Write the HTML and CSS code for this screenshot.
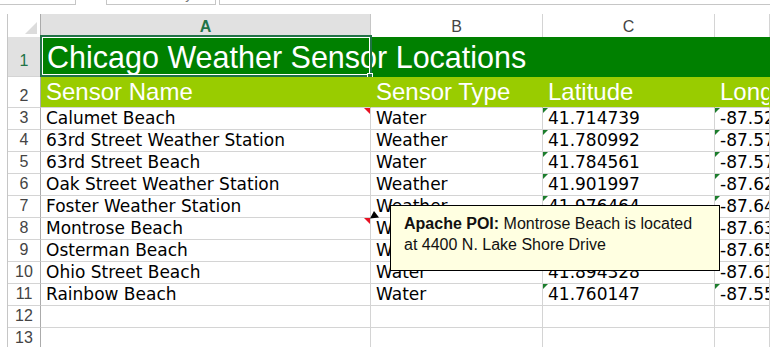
FILE: index.html
```html
<!DOCTYPE html>
<html lang="en">
<head>
    <meta charset="UTF-8">
    <title>Chicago Weather Sensor Locations</title>
    <link rel="stylesheet" href="styles.css">
</head>
<body>
    <!-- Bottom edge of the ribbon buttons -->
    <div class="tabs">
        <div class="tab tab-first"></div>
        <div class="tab tab-mid"><span>Summary Rang</span></div>
        <div class="tab tab-last"></div>
    </div>

    <div class="sheet">
        <div class="row colheads">
            <div class="corner"><span class="corner-tri"></span></div>
            <div class="colhead selected">A</div>
            <div class="colhead">B</div>
            <div class="colhead">C</div>
            <div class="colhead"></div>
        </div>

        <div class="row title-row">
            <div class="rowhead selected">1</div>
            <div class="title">
                Chicago Weather Sensor Locations
                <div class="selection"><span class="handle"></span></div>
            </div>
        </div>

        <div class="row head-row">
            <div class="rowhead">2</div>
            <div class="cell">Sensor Name</div>
            <div class="cell">Sensor Type</div>
            <div class="cell">Latitude</div>
            <div class="cell">Longitude</div>
        </div>

        <div class="row">
            <div class="rowhead">3</div>
            <div class="cell note">Calumet Beach</div>
            <div class="cell">Water</div>
            <div class="cell txt">41.714739</div>
            <div class="cell txt">-87.527356</div>
        </div>
        <div class="row">
            <div class="rowhead">4</div>
            <div class="cell">63rd Street Weather Station</div>
            <div class="cell">Weather</div>
            <div class="cell txt">41.780992</div>
            <div class="cell txt">-87.5727</div>
        </div>
        <div class="row">
            <div class="rowhead">5</div>
            <div class="cell">63rd Street Beach</div>
            <div class="cell">Water</div>
            <div class="cell txt">41.784561</div>
            <div class="cell txt">-87.571453</div>
        </div>
        <div class="row">
            <div class="rowhead">6</div>
            <div class="cell">Oak Street Weather Station</div>
            <div class="cell">Weather</div>
            <div class="cell txt">41.901997</div>
            <div class="cell txt">-87.622092</div>
        </div>
        <div class="row">
            <div class="rowhead">7</div>
            <div class="cell">Foster Weather Station</div>
            <div class="cell">Weather</div>
            <div class="cell txt">41.976464</div>
            <div class="cell txt">-87.647525</div>
        </div>
        <div class="row">
            <div class="rowhead">8</div>
            <div class="cell note">Montrose Beach</div>
            <div class="cell">Water</div>
            <div class="cell txt">41.969094</div>
            <div class="cell txt">-87.638946</div>
        </div>
        <div class="row">
            <div class="rowhead">9</div>
            <div class="cell">Osterman Beach</div>
            <div class="cell">Water</div>
            <div class="cell txt">41.987675</div>
            <div class="cell txt">-87.651008</div>
        </div>
        <div class="row">
            <div class="rowhead">10</div>
            <div class="cell">Ohio Street Beach</div>
            <div class="cell">Water</div>
            <div class="cell txt">41.894328</div>
            <div class="cell txt">-87.613083</div>
        </div>
        <div class="row">
            <div class="rowhead">11</div>
            <div class="cell">Rainbow Beach</div>
            <div class="cell">Water</div>
            <div class="cell txt">41.760147</div>
            <div class="cell txt">-87.550086</div>
        </div>
        <div class="row">
            <div class="rowhead">12</div>
            <div class="cell"></div>
            <div class="cell"></div>
            <div class="cell"></div>
            <div class="cell"></div>
        </div>
        <div class="row">
            <div class="rowhead">13</div>
            <div class="cell"></div>
            <div class="cell"></div>
            <div class="cell"></div>
            <div class="cell"></div>
        </div>

        <!-- Comment on A8 -->
        <svg class="comment-arrow" width="10" height="8" viewBox="0 0 10 8">
            <polygon points="0,7.5 4,0 9,6.5" fill="#000"/>
        </svg>
        <div class="comment">
            <b>Apache POI:</b> Montrose Beach is located<br>
            at 4400 N. Lake Shore Drive
        </div>
    </div>
</body>
</html>
```

FILE: styles.css
```css
/* General */
* {
    box-sizing: border-box;
}

body {
    margin: 0;
    width: 770px;
    height: 347px;
    overflow: hidden;
    background-color: #fff;
    font-family: "Liberation Sans", Arial, sans-serif;
    color: #000;
}

/* Ribbon edge at the top */
.tabs {
    display: flex;
    height: 5px;
    overflow: hidden;
}

.tab {
    height: 5px;
    border-bottom: 1px solid #c6c6c6;
    background-color: #fff;
}

.tab-first {
    width: 76px;
    border-right: 1px solid #c6c6c6;
}

.tab-mid {
    width: 110px;
    margin-left: 30px;
    border-left: 1px solid #c6c6c6;
    border-right: 1px solid #c6c6c6;
    display: flex;
    align-items: flex-end;
    justify-content: center;
    font-size: 14px;
    line-height: 14px;
    color: #777;
}

.tab-mid span {
    margin-bottom: 3px;
    padding-left: 40px;
    white-space: nowrap;
}

.tab-last {
    flex: 1;
    margin-left: 3px;
    border-left: 1px solid #c6c6c6;
}

/* Sheet */
.sheet {
    position: relative;
    margin: 9px 0 0 7px;
    border-left: 1px solid #c6c6c6;
    overflow: hidden;
}

.row {
    display: grid;
    grid-template-columns: 33px 330px 172px 172px 1fr;
    height: 22px;
}

.colheads {
    height: 23px;
}

.corner {
    display: flex;
    align-items: flex-end;
    justify-content: flex-end;
    padding: 0 3px 3px 0;
    border-right: 1px solid #ababab;
    border-bottom: 1px solid #ababab;
}

.corner-tri {
    width: 0;
    height: 0;
    border-left: 12px solid transparent;
    border-bottom: 12px solid #dcdcdc;
}

.colhead {
    text-align: center;
    font-size: 16px;
    line-height: 21px;
    padding-top: 2px;
    color: #444;
    border-right: 1px solid #d4d4d4;
    border-bottom: 1px solid #ababab;
}

.colhead.selected {
    background-color: #e1e1e1;
    color: #217346;
    font-weight: bold;
    border-right-color: #c6c6c6;
}

.rowhead {
    display: flex;
    align-items: flex-end;
    justify-content: center;
    padding-bottom: 2px;
    font-size: 16px;
    color: #444;
    border-right: 1px solid #ababab;
    border-bottom: 1px solid #d4d4d4;
}

.rowhead.selected {
    background-color: #e1e1e1;
    color: #217346;
    padding-bottom: 6px;
}

/* Title row */
.title-row {
    height: 40px;
}

.title {
    position: relative;
    grid-column: 2 / -1;
    background-color: #008000;
    color: #fff;
    font-size: 30.5px;
    line-height: 34px;
    padding: 0 0 3px 6px;
    display: flex;
    align-items: flex-end;
    white-space: nowrap;
}

.selection {
    position: absolute;
    left: -1px;
    top: -2px;
    width: 332px;
    height: 42px;
    border: 2px solid #217346;
    box-shadow: inset 0 0 0 1px #fff;
}

.handle {
    position: absolute;
    right: -3px;
    bottom: -4px;
    width: 6px;
    height: 6px;
    background-color: #217346;
    border: 1px solid #fff;
}

/* Column captions */
.head-row {
    height: 31px;
}

.head-row .cell {
    background-color: #99cc00;
    color: #fff;
    font-family: "Liberation Sans", Arial, sans-serif;
    font-size: 24px;
    line-height: 27px;
    padding-bottom: 2px;
    border-right-color: #99cc00;
    border-bottom-color: #d4d4d4;
}

/* Data cells */
.cell {
    position: relative;
    display: flex;
    align-items: flex-end;
    padding: 0 0 1px 5px;
    font-family: "DejaVu Sans", Verdana, sans-serif;
    font-size: 17px;
    line-height: 20px;
    white-space: nowrap;
    overflow: hidden;
    border-right: 1px solid #d4d4d4;
    border-bottom: 1px solid #d4d4d4;
}

/* Red comment marker */
.note::after {
    content: "";
    position: absolute;
    top: 0;
    right: 0;
    border-top: 6px solid #e81123;
    border-left: 6px solid transparent;
}

/* Green "number stored as text" marker */
.txt::before {
    content: "";
    position: absolute;
    top: 0;
    left: 0;
    border-top: 5px solid #1c7d2c;
    border-right: 5px solid transparent;
}

/* Comment box */
.comment-arrow {
    position: absolute;
    left: 362px;
    top: 197px;
}

.comment {
    position: absolute;
    left: 382px;
    top: 191px;
    width: 330px;
    height: 66px;
    padding: 7px 0 0 13px;
    background-color: #ffffe1;
    border: 1px solid #000;
    font-family: "Liberation Sans", Arial, sans-serif;
    font-size: 16px;
    line-height: 21px;
    color: #111;
}
```
